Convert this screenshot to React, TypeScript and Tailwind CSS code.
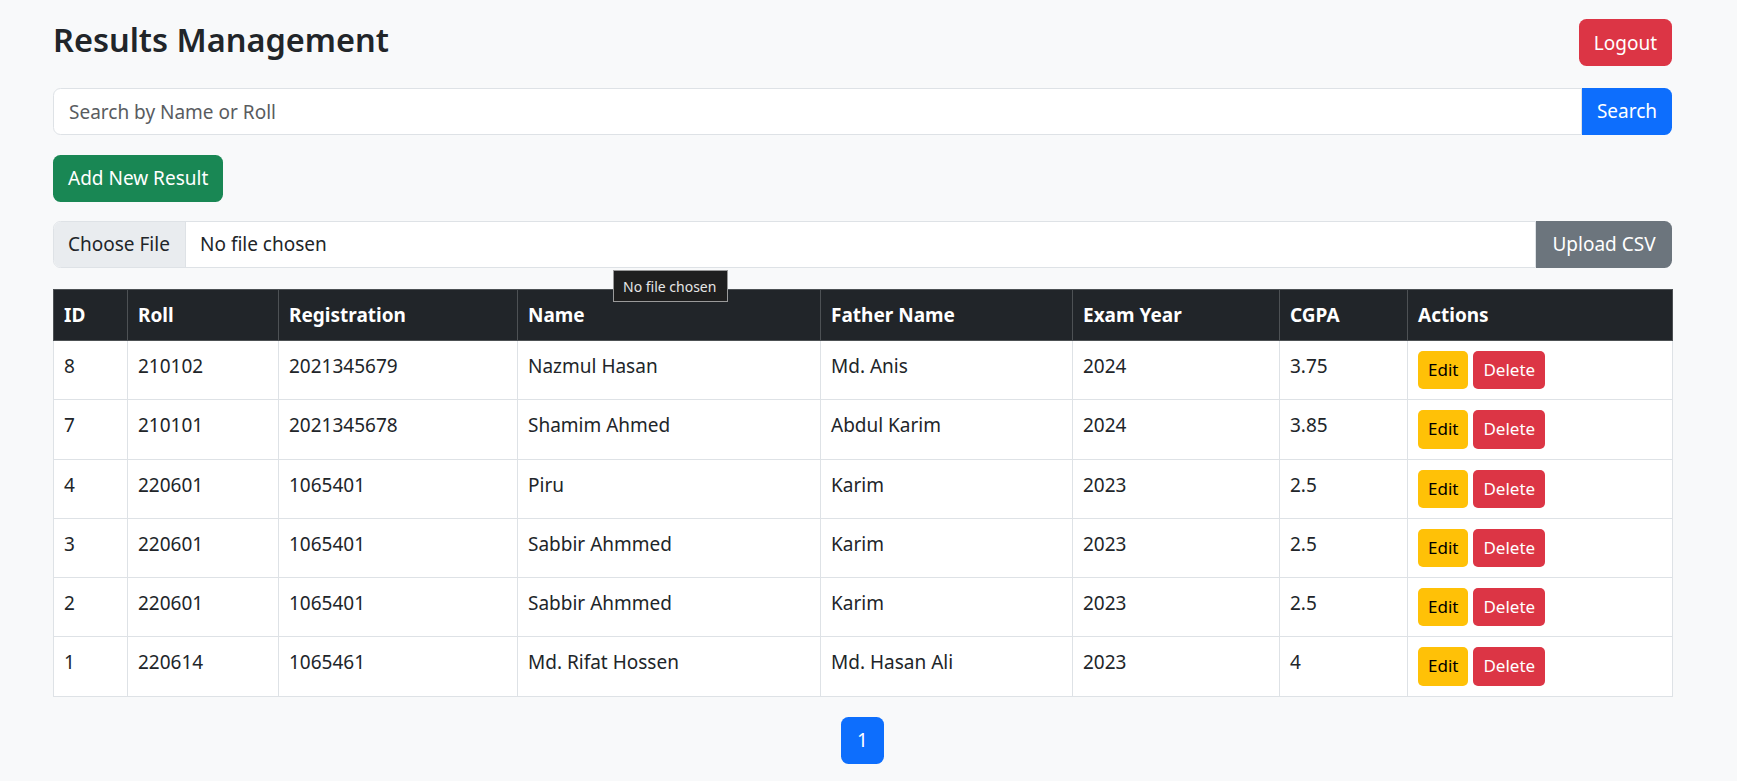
import React from "react";

const rows = [
  { id: 8, roll: "210102", reg: "2021345679", name: "Nazmul Hasan", father: "Md. Anis", year: "2024", cgpa: "3.75" },
  { id: 7, roll: "210101", reg: "2021345678", name: "Shamim Ahmed", father: "Abdul Karim", year: "2024", cgpa: "3.85" },
  { id: 4, roll: "220601", reg: "1065401", name: "Piru", father: "Karim", year: "2023", cgpa: "2.5" },
  { id: 3, roll: "220601", reg: "1065401", name: "Sabbir Ahmmed", father: "Karim", year: "2023", cgpa: "2.5" },
  { id: 2, roll: "220601", reg: "1065401", name: "Sabbir Ahmmed", father: "Karim", year: "2023", cgpa: "2.5" },
  { id: 1, roll: "220614", reg: "1065461", name: "Md. Rifat Hossen", father: "Md. Hasan Ali", year: "2023", cgpa: "4" },
];

const headers = ["ID", "Roll", "Registration", "Name", "Father Name", "Exam Year", "CGPA", "Actions"];
const widths = [74, 151, 239, 303, 252, 207, 128, 265];

export default function App() {
  return (
    <div
      className="min-h-screen bg-[#f8f9fa] text-[#212529]"
      style={{ fontFamily: '"Noto Sans", "Open Sans", sans-serif' }}
    >
      <div className="pl-[53px] pr-[65px] pt-[19px] pb-[20px]">
        {/* Header */}
        <div className="flex justify-between items-start mb-[22px]">
          <h3 className="text-[32.5px] font-semibold leading-[1.2] m-0 mt-[1px]">Results Management</h3>
          <button className="h-[47px] px-[15px] bg-[#dc3545] text-white text-[19px] leading-[30px] rounded-[7.5px]">
            Logout
          </button>
        </div>

        {/* Search */}
        <div className="flex h-[47px] mb-[20px]">
          <input
            className="flex-1 min-w-0 h-full bg-white border border-[#dee2e6] rounded-l-[7.5px] px-[15px] text-[19px] outline-none placeholder:text-[#595c5f]"
            placeholder="Search by Name or Roll"
          />
          <button className="h-full w-[90px] bg-[#0d6efd] text-white text-[19px] rounded-r-[7.5px]">
            Search
          </button>
        </div>

        {/* Add */}
        <div className="mb-[19px]">
          <button className="h-[47px] px-[15px] bg-[#198754] text-white text-[19px] rounded-[7.5px]">
            Add New Result
          </button>
        </div>

        {/* File upload */}
        <div className="relative flex h-[47px] mb-[21px]">
          <div className="flex-1 flex items-stretch bg-white border border-[#dee2e6] rounded-l-[7.5px] overflow-hidden text-[19px]">
            <div className="flex items-center bg-[#e9ecef] px-[14px] border-r border-[#dee2e6] w-[132px]">
              Choose File
            </div>
            <div className="flex items-center pl-[14px]">No file chosen</div>
          </div>
          <button className="h-full w-[136px] bg-[#6c757d] text-white text-[19px] rounded-r-[7.5px]">
            Upload CSV
          </button>
          <div className="absolute left-[560px] top-[49px] h-[32px] w-[115px] flex items-center pl-[9px] bg-[#1f1f1f] border border-[#9a9a9a] text-[#e6e6e6] text-[14px] z-10 whitespace-nowrap">
            No file chosen
          </div>
        </div>

        {/* Table */}
        <table className="w-full table-fixed border-collapse text-[19px]">
          <colgroup>
            {widths.map((w, i) => (
              <col key={i} style={{ width: w }} />
            ))}
          </colgroup>
          <thead>
            <tr className="bg-[#212529] text-white">
              {headers.map((h) => (
                <th
                  key={h}
                  className="border border-[#4d5154] px-[10px] py-[10px] text-left font-bold leading-[30px] align-top"
                >
                  {h}
                </th>
              ))}
            </tr>
          </thead>
          <tbody className="bg-white">
            {rows.map((r) => (
              <tr key={r.id}>
                {[r.id, r.roll, r.reg, r.name, r.father, r.year, r.cgpa].map((v, i) => (
                  <td key={i} className="border border-[#dee2e6] px-[10px] py-[10px] leading-[30px] align-top">
                    {v}
                  </td>
                ))}
                <td className="border border-[#dee2e6] px-[10px] py-[10px] align-top">
                  <div className="flex gap-[5px]">
                    <button className="h-[38.25px] px-[10px] bg-[#ffc107] text-black text-[17px] leading-[26px] rounded-[5px]">
                      Edit
                    </button>
                    <button className="h-[38.25px] px-[10px] bg-[#dc3545] text-white text-[17px] leading-[26px] rounded-[5px]">
                      Delete
                    </button>
                  </div>
                </td>
              </tr>
            ))}
          </tbody>
        </table>

        {/* Pagination */}
        <div className="flex justify-center mt-[20px]">
          <button className="h-[47px] w-[43px] bg-[#0d6efd] text-white text-[19px] rounded-[7.5px]">1</button>
        </div>
      </div>
    </div>
  );
}
